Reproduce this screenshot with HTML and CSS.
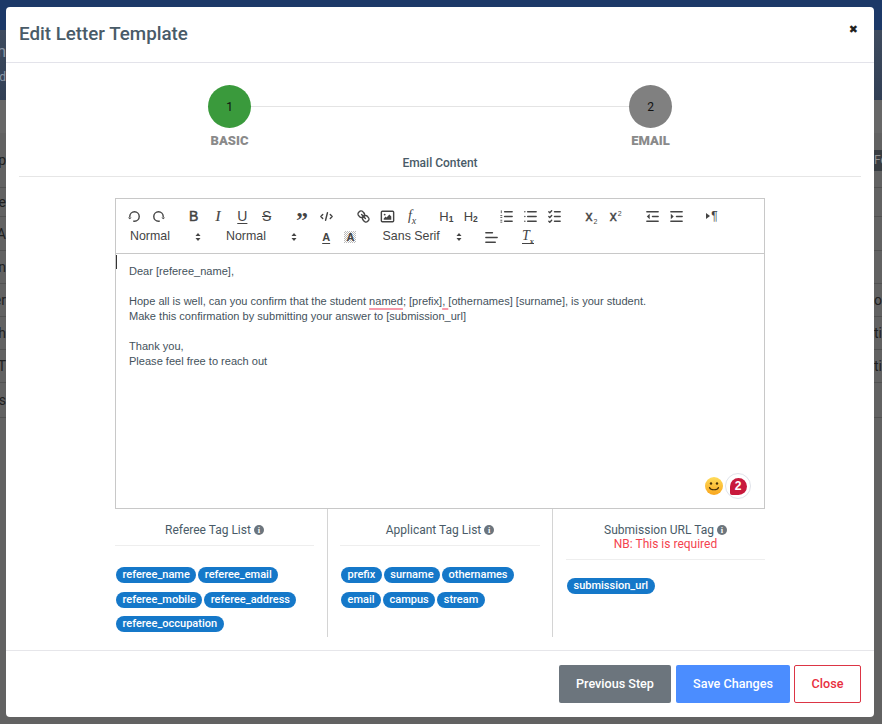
FILE: index.html
```html
<!DOCTYPE html>
<html lang="en">
<head>
<meta charset="utf-8">
<title>Edit Letter Template</title>
<link rel="stylesheet" href="styles.css">
</head>
<body>
<div class="backdrop">
  <div class="bg-top"></div>
  <div class="bg-band">
    <div class="bg-band-row one"><span class="edge-l">n</span></div>
    <div class="bg-band-row two"><span class="edge-l">d</span></div>
  </div>
  <div class="bg-gap"></div>
  <div class="bg-row r-head"><span class="edge-l">p</span><span class="edge-r dark">Fe</span></div>
  <div class="bg-row r1"><span class="edge-l">ne</span><span class="edge-r"></span></div>
  <div class="bg-row r2"><span class="edge-l">A</span><span class="edge-r"></span></div>
  <div class="bg-row r3"><span class="edge-l">n</span><span class="edge-r"></span></div>
  <div class="bg-row r3"><span class="edge-l">er</span><span class="edge-r">on</span></div>
  <div class="bg-row r3"><span class="edge-l">h</span><span class="edge-r">ti</span></div>
  <div class="bg-row r3"><span class="edge-l">T</span><span class="edge-r">ti</span></div>
  <div class="bg-row r4"><span class="edge-l">s</span><span class="edge-r"></span></div>
</div>

<div class="modal">
  <header class="modal-head">
    <h1 class="modal-title">Edit Letter Template</h1>
    <span class="close-x">✖</span>
  </header>

  <div class="modal-body">
    <div class="steps">
      <div class="step"><div class="circle green">1</div><div class="step-label">BASIC</div></div>
      <div class="step-line"></div>
      <div class="step"><div class="circle grey">2</div><div class="step-label">EMAIL</div></div>
    </div>
    <div class="section-title">Email Content</div>
    <div class="section-rule"></div>

    <div class="editor">
      <div class="toolbar">
        <div class="tool-row">
          <span class="group">
            <span class="btn"><svg class="ico" viewBox="0 0 18 18"><polygon class="fill" points="6 10 4 12 2 10 6 10"/><path class="st" d="M8.09,13.91A4.6,4.6,0,0,0,9,14,5,5,0,1,0,4,9"/></svg></span>
            <span class="btn"><svg class="ico" viewBox="0 0 18 18"><polygon class="fill" points="12 10 14 12 16 10 12 10"/><path class="st" d="M9.91,13.91A4.6,4.6,0,0,1,9,14a5,5,0,1,1,5-5"/></svg></span>
          </span>
          <span class="group">
            <span class="btn t-b">B</span>
            <span class="btn t-i">I</span>
            <span class="btn t-u">U</span>
            <span class="btn t-s">S</span>
          </span>
          <span class="group">
            <span class="btn t-q">”</span>
            <span class="btn"><svg class="ico" viewBox="0 0 18 18"><polyline class="st" points="5 7 3 9 5 11"/><polyline class="st" points="13 7 15 9 13 11"/><line class="st" x1="10" x2="8" y1="5" y2="13"/></svg></span>
          </span>
          <span class="group g-link">
            <span class="btn"><svg class="ico" viewBox="0 0 18 18"><line class="st" x1="7" x2="11" y1="7" y2="11"/><path class="st" d="M8.9,4.577a3.476,3.476,0,0,1,.36,4.679A3.476,3.476,0,0,1,4.577,8.9C3.185,7.5,2.035,6.4,4.217,4.217,6.4,2.035,7.5,3.185,8.9,4.577Z"/><path class="st" d="M13.423,9.1a3.476,3.476,0,0,0-4.679-.36,3.476,3.476,0,0,0,.36,4.679c1.392,1.392,2.5,2.542,4.679.36S14.815,10.5,13.423,9.1Z"/></svg></span>
            <span class="btn"><svg class="ico" viewBox="0 0 18 18"><rect class="st" x="2.5" y="3.5" width="13" height="11" rx="1"/><circle class="fill" cx="6" cy="7" r="1"/><polygon class="fill" points="5 12.5 5 11 7 9 8 10 11 7 13 9 13 12.5"/></svg></span>
            <span class="btn t-fx"><span>f<sub>x</sub></span></span>
          </span>
          <span class="group">
            <span class="btn t-h"><span>H<sub>1</sub></span></span>
            <span class="btn t-h"><span>H<sub>2</sub></span></span>
          </span>
          <span class="group">
            <span class="btn"><svg class="ico" viewBox="0 0 18 18"><line class="st" x1="7" x2="15" y1="4" y2="4"/><line class="st" x1="7" x2="15" y1="9" y2="9"/><line class="st" x1="7" x2="15" y1="14" y2="14"/><line class="thin" x1="3.5" x2="3.5" y1="2.5" y2="5.5"/><line class="thin" x1="2.5" x2="4.5" y1="8" y2="8"/><line class="thin" x1="2.5" x2="4.5" y1="10" y2="10"/><line class="thin" x1="2.5" x2="4.5" y1="13" y2="13"/><line class="thin" x1="2.5" x2="4.5" y1="15" y2="15"/></svg></span>
            <span class="btn"><svg class="ico" viewBox="0 0 18 18"><line class="st" x1="6" x2="15" y1="4" y2="4"/><line class="st" x1="6" x2="15" y1="9" y2="9"/><line class="st" x1="6" x2="15" y1="14" y2="14"/><line class="st" x1="3" x2="3" y1="4" y2="4"/><line class="st" x1="3" x2="3" y1="9" y2="9"/><line class="st" x1="3" x2="3" y1="14" y2="14"/></svg></span>
            <span class="btn"><svg class="ico" viewBox="0 0 18 18"><line class="st" x1="9" x2="15" y1="4" y2="4"/><polyline class="st" points="3 4 4 5 6 3"/><line class="st" x1="9" x2="15" y1="14" y2="14"/><polyline class="st" points="3 14 4 15 6 13"/><line class="st" x1="9" x2="15" y1="9" y2="9"/><polyline class="st" points="3 9 4 10 6 8"/></svg></span>
          </span>
          <span class="group">
            <span class="btn t-x"><span>x<sub>2</sub></span></span>
            <span class="btn t-x"><span>x<sup>2</sup></span></span>
          </span>
          <span class="group g-ind">
            <span class="btn"><svg class="ico" viewBox="0 0 18 18"><line class="st" x1="3" x2="15" y1="14" y2="14"/><line class="st" x1="3" x2="15" y1="4" y2="4"/><line class="st" x1="9" x2="15" y1="9" y2="9"/><polygon class="fill" points="6 6 6 12 3 9"/></svg></span>
            <span class="btn"><svg class="ico" viewBox="0 0 18 18"><line class="st" x1="3" x2="15" y1="14" y2="14"/><line class="st" x1="3" x2="15" y1="4" y2="4"/><line class="st" x1="9" x2="15" y1="9" y2="9"/><polygon class="fill" points="3 6 3 12 6 9"/></svg></span>
          </span>
          <span class="group">
            <span class="btn t-rtl"><svg class="tri" viewBox="0 0 4 6"><polygon class="fill" points="0 0 4 3 0 6"/></svg>¶</span>
          </span>
        </div>
        <div class="tool-row row-two">
          <span class="picker"><span>Normal</span><svg class="chev" viewBox="0 0 6 10"><polygon class="fill" points="0.5 4 3 1 5.5 4"/><polygon class="fill" points="0.5 6 3 9 5.5 6"/></svg></span>
          <span class="picker"><span>Normal</span><svg class="chev" viewBox="0 0 6 10"><polygon class="fill" points="0.5 4 3 1 5.5 4"/><polygon class="fill" points="0.5 6 3 9 5.5 6"/></svg></span>
          <span class="btn t-color">A</span>
          <span class="btn t-bg"><span class="dither">A</span></span>
          <span class="picker font"><span>Sans Serif</span><svg class="chev" viewBox="0 0 6 10"><polygon class="fill" points="0.5 4 3 1 5.5 4"/><polygon class="fill" points="0.5 6 3 9 5.5 6"/></svg></span>
          <span class="btn b-align"><svg class="ico" viewBox="0 0 18 18"><line class="st" x1="3" x2="10" y1="4" y2="4"/><line class="st" x1="3" x2="15" y1="9" y2="9"/><line class="st" x1="3" x2="13" y1="14" y2="14"/></svg></span>
          <span class="btn t-clean"><span class="under">T<sub>x</sub></span></span>
        </div>
      </div>
      <div class="content">
        <span class="caret"></span>
        <p>Dear [referee_name],</p>
        <p class="blank"></p>
        <p>Hope all is well, can you confirm that the student <span class="miss">named</span>; [prefix]<span class="miss">, </span>[othernames] [surname], is your student.</p>
        <p>Make this confirmation by submitting your answer to [submission_url]</p>
        <p class="blank"></p>
        <p>Thank you,</p>
        <p>Please feel free to reach out</p>
        <svg class="smile" viewBox="0 0 18 18">
          <defs><linearGradient id="sm" x1="0" x2="0" y1="0" y2="1"><stop offset="0" stop-color="#ffdc5a"/><stop offset="1" stop-color="#f9a61e"/></linearGradient></defs>
          <circle cx="9" cy="9" r="9" fill="url(#sm)"/>
          <circle cx="6" cy="6.5" r="1.2" fill="#4a3208"/>
          <circle cx="12" cy="6.5" r="1.2" fill="#4a3208"/>
          <path d="M4.5 10.5c1 3 8 3 9 0" fill="none" stroke="#4a3208" stroke-width="1.2" stroke-linecap="round"/>
        </svg>
        <span class="badge"><span class="badge-in">2</span></span>
      </div>
    </div>

    <div class="tag-cols">
      <section class="tag-col c1">
        <div class="tag-head">Referee Tag List <span class="info">i</span></div>
        <div class="tags">
          <span class="tag">referee_name</span><span class="tag">referee_email</span><span class="tag">referee_mobile</span><span class="tag">referee_address</span><span class="tag">referee_occupation</span>
        </div>
      </section>
      <section class="tag-col c2">
        <div class="tag-head">Applicant Tag List <span class="info">i</span></div>
        <div class="tags">
          <span class="tag">prefix</span><span class="tag">surname</span><span class="tag">othernames</span><span class="tag">email</span><span class="tag">campus</span><span class="tag">stream</span>
        </div>
      </section>
      <section class="tag-col c3">
        <div class="tag-head two">Submission URL Tag <span class="info">i</span><div class="req">NB: This is required</div></div>
        <div class="tags">
          <span class="tag">submission_url</span>
        </div>
      </section>
    </div>
  </div>

  <footer class="modal-foot">
    <button class="b b-prev">Previous Step</button>
    <button class="b b-save">Save Changes</button>
    <button class="b b-close">Close</button>
  </footer>
</div>
</body>
</html>
```

FILE: styles.css
```css
* { box-sizing: border-box; }
html, body { margin: 0; padding: 0; height: 100%; overflow: hidden; }
body { background: #626262; font-family: Roboto, "Liberation Sans", sans-serif; color: #44525c; }

.backdrop { height: 724px; display: flex; flex-direction: column; color: #1f1f1f; font-size: 14px; }
.bg-top { height: 30px; background: #1c3968; }
.bg-band { height: 70px; background: linear-gradient(#3e4b5e, #323f55); color: #8c97a6; }
.bg-band-row { display: flex; }
.bg-band-row.one { height: 32px; padding-top: 12px; font-size: 16px; }
.bg-band-row.two { height: 38px; padding-top: 8px; font-size: 12px; }
.bg-gap { height: 33px; background: #676767; }
.bg-row { display: flex; justify-content: space-between; border-bottom: 1px solid #525252; align-items: center; }
.r-head { height: 55px; }
.r1 { height: 29px; }
.r2 { height: 34px; }
.r3 { height: 33px; }
.r4 { height: 35px; }
.edge-l { width: 6px; overflow: hidden; display: flex; justify-content: flex-end; white-space: nowrap; }
.edge-r { width: 8px; overflow: hidden; white-space: nowrap; }
.edge-r.dark { background: #383d42; color: #8f8f8f; height: 21px; line-height: 21px; font-size: 12px; }

.modal { position: absolute; left: 6px; top: 7px; width: 868px; height: 710px; background: #fff; border-radius: 4px; display: flex; flex-direction: column; }
.modal-head { height: 56px; border-bottom: 1px solid #e3e3ea; padding: 0 13px; display: flex; align-items: flex-start; justify-content: space-between; flex: none; }
.modal-title { margin: 15px 0 0; font-size: 18.75px; line-height: 24px; font-weight: 500; color: #495b68; }
.close-x { font-family: "DejaVu Sans", sans-serif; font-size: 11px; line-height: 12px; margin: 17px 3px 0 0; color: #222; }

.modal-body { flex: 1; display: flex; flex-direction: column; align-items: center; }
.steps { width: 464px; display: flex; align-items: flex-start; margin-top: 22px; flex: none; }
.step { width: 43px; display: flex; flex-direction: column; align-items: center; }
.step-line { flex: 1; height: 1px; margin-top: 21px; background: #e4e4e4; }
.circle { width: 43px; height: 43px; border-radius: 50%; display: flex; align-items: center; justify-content: center; font-size: 12px; color: #111; }
.circle.green { background: #3a9a3c; }
.circle.grey { background: #808080; }
.step-label { margin-top: 6px; font-size: 13px; line-height: 14px; font-weight: 900; color: #8a8a8a; }
.section-title { margin-top: 8px; font-size: 12px; line-height: 14px; font-weight: 500; color: #495b68; }
.section-rule { width: 842px; height: 1px; background: #e6e6e6; margin-top: 6px; flex: none; }

.editor { width: 650px; height: 311px; margin-top: 21px; border: 1px solid #c8c8c8; display: flex; flex-direction: column; flex: none; }
.toolbar { height: 55px; border-bottom: 1px solid #c8c8c8; padding: 5px 0 0 6px; flex: none; color: #444; font-family: "Liberation Sans", sans-serif; }
.tool-row { display: flex; height: 24px; align-items: center; }
.row-two { margin-top: -3px; }
.group { display: flex; margin-right: 11px; }
.g-link { margin-left: 2px; margin-right: 10px; }
.g-ind { margin-left: 3px; }
.btn { width: 24.3px; height: 24px; display: flex; align-items: center; justify-content: center; font-size: 13px; flex: none; }
.ico { width: 17px; height: 17px; }
.st { fill: none; stroke: #444; stroke-width: 1.5; stroke-linecap: round; stroke-linejoin: round; }
.thin { fill: none; stroke: #444; stroke-width: 0.9; }
.fill { fill: #444; }
.t-b { font-size: 14px; -webkit-text-stroke: 0.5px #444; }
.t-i { font-family: "Liberation Serif", serif; font-style: italic; font-size: 15px; -webkit-text-stroke: 0.2px #444; }
.t-u { text-decoration: underline; font-size: 14px; text-underline-offset: 2px; }
.t-s { text-decoration: line-through; font-size: 14px; }
.t-q { font-family: "Liberation Serif", serif; font-weight: 700; font-size: 24px; line-height: 24px; padding-top: 7px; }
.t-fx { font-family: "Liberation Serif", serif; font-style: italic; font-size: 14px; }
.t-fx sub { font-size: 10px; line-height: 0; }
.t-h { font-size: 13px; }
.t-h sub { font-size: 8.5px; line-height: 0; font-weight: 700; vertical-align: -1px; }
.t-x { font-size: 14px; -webkit-text-stroke: 0.4px #444; padding-left: 3px; }
.t-x sub { font-size: 7px; line-height: 0; -webkit-text-stroke: 0; vertical-align: -3px; margin-left: 1px; }
.t-x sup { font-size: 7px; line-height: 0; -webkit-text-stroke: 0; vertical-align: 5px; margin-left: 1px; }
.t-rtl { font-size: 12px; gap: 1px; }
.tri { width: 4px; height: 6px; }
.picker { width: 96px; padding-left: 8px; padding-right: 17px; display: flex; justify-content: space-between; align-items: center; font-size: 12.4px; flex: none; height: 24px; }
.picker > span { position: relative; top: -1px; }
.picker.font { margin-left: 9px; padding-right: 5.6px; padding-left: 11px; }
.chev { width: 6px; height: 10px; }
.t-color { font-size: 11px; font-weight: 700; text-decoration: underline; text-underline-offset: 2px; }
.t-bg { font-size: 11px; font-weight: 700; }
.dither { width: 12px; height: 12px; display: flex; align-items: center; justify-content: center; background: repeating-conic-gradient(#bbb 0 25%, #fff 0 50%) 0 0 / 2px 2px; }
.b-align { margin-left: 11.4px; }
.t-clean { margin-left: 12.5px; font-family: "Liberation Serif", serif; font-style: italic; font-size: 14px; }
.under { border-bottom: 1px solid #444; line-height: 12px; height: 14px; }
.under sub { font-size: 8px; line-height: 0; font-weight: 700; }

.content { position: relative; flex: 1; padding: 10px 13px; font-family: "Liberation Sans", sans-serif; font-size: 11.06px; line-height: 15px; color: #44525c; }
.content p { margin: 0; }
.content p.blank { height: 15px; }
.miss { text-decoration: underline 2px #f79aab; text-underline-offset: 3px; text-decoration-skip-ink: none; white-space: pre; }
.caret { position: absolute; left: 0; top: 1px; width: 1px; height: 14px; background: #333; }
.smile { position: absolute; right: 41px; bottom: 13px; width: 18px; height: 18px; }
.badge { position: absolute; right: 13px; bottom: 9px; width: 26px; height: 26px; border-radius: 50%; border: 1.5px solid #dfe3ea; display: flex; align-items: center; justify-content: center; }
.badge-in { width: 17px; height: 17px; border-radius: 50% 50% 50% 2px; background: #c8193c; color: #fff; font-size: 12px; font-weight: 900; display: flex; align-items: center; justify-content: center; }

.tag-cols { width: 650px; display: flex; height: 129px; flex: none; }
.tag-col { height: 128px; }
.c1 { width: 213px; border-right: 1px solid #d4d4d4; padding-right: 13px; }
.c2 { width: 225px; border-right: 1px solid #d4d4d4; padding: 0 12px 0 12px; }
.c3 { width: 212px; padding-left: 13px; }
.tag-head { height: 37px; padding-top: 14px; border-bottom: 1px solid #eee; text-align: center; font-size: 12px; line-height: 14px; color: #495b68; }
.tag-head.two { height: 51px; }
.req { color: #f4434f; font-size: 12px; }
.info { display: inline-block; width: 10px; height: 10px; border-radius: 50%; background: #6c757d; color: #fff; font-size: 8.5px; font-weight: 900; line-height: 10px; text-align: center; vertical-align: 1px; font-family: "Liberation Serif", serif; }
.tags { display: flex; flex-wrap: wrap; gap: 8.5px 2px; padding: 21px 0 0 1px; }
.c3 .tags { padding-top: 18px; }
.tag { height: 16px; padding: 0 6.5px; border-radius: 8px; background: #1578c9; color: #fff; font-size: 11px; font-weight: 500; line-height: 16px; white-space: nowrap; }

.modal-foot { height: 67px; border-top: 1px solid #e6e6ea; padding: 14px 13px 0 0; display: flex; justify-content: flex-end; gap: 5px; flex: none; }
.b { height: 38px; border-radius: 2px; border: 1px solid transparent; font-family: Roboto, sans-serif; font-size: 12.6px; font-weight: 500; padding: 0 0 2px; color: #fff; }
.b-prev { width: 112px; background: #6c757d; }
.b-save { width: 114px; background: #4b8dff; }
.b-close { width: 67px; margin-left: -1px; background: #fff; border-color: #dc3545; color: #e8303f; }
```
